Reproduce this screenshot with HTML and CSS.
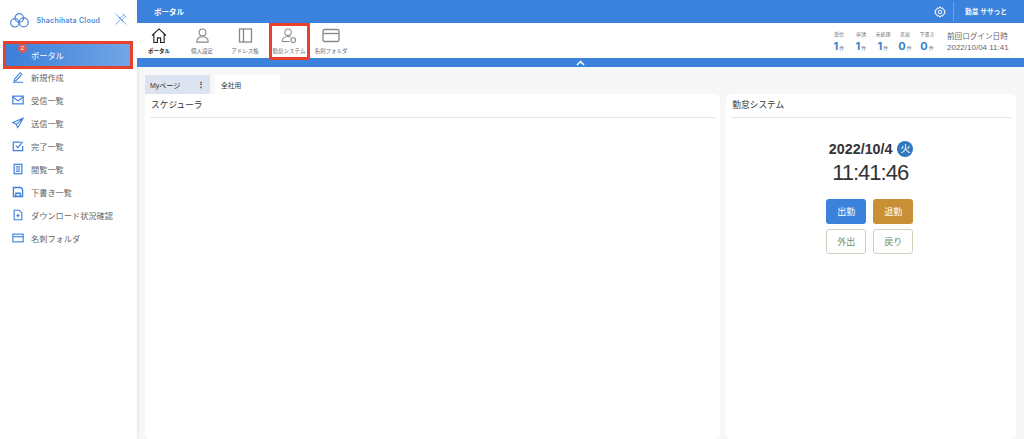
FILE: index.html
```html
<!DOCTYPE html>
<html lang="ja">
<head>
  <meta charset="UTF-8" />
  <title>ポータル</title>
  <link rel="stylesheet" href="styles.css">
</head>
<body>
  <div class="app">
    <aside class="sidebar">
      <div class="brand">
        <svg class="brand-logo" width="19" height="15" viewBox="0 0 19 15" fill="none" stroke="#4a88d8" stroke-width="1.200">
          <circle cx="4.800" cy="9.800" r="4.200"/>
          <circle cx="9.300" cy="5" r="4.300"/>
          <circle cx="13.800" cy="9.300" r="4.500"/>
        </svg>
        <span class="brand-name">Shachihata Cloud</span>
        <svg class="brand-pin" width="12" height="12" viewBox="0 0 12 12" fill="none" stroke="#7aa8e6" stroke-width="0.9">
          <path d="M.5.5l11 11M7.500.5l4 4M8.700 1.700L6 4.500 3.500 4.500 7.500 8.500 7.500 6l2.800-2.700M5 7L.5 11.500"/>
        </svg>
      </div>
      <nav class="side-nav">
        <a class="side-item active">
          <span class="badge">2</span>
          <svg class="side-icon" width="12" height="12" viewBox="0 0 14 14" fill="none" stroke="#3b7fd9" stroke-width="1">
            <circle cx="7" cy="4" r="3"/><path d="M1 13c0-3 2.500-5 6-5s6 2 6 5z"/>
          </svg>
          <span>ポータル</span>
        </a>
        <a class="side-item">
          <svg class="side-icon" width="12" height="12" viewBox="0 0 14 14" fill="none" stroke="#3b7fd9" stroke-width="1.200">
            <path d="M3 9.500L9.500 2l2 1.800L5 11l-2.500.6zM1 13h12"/>
          </svg>
          <span>新規作成</span>
        </a>
        <a class="side-item">
          <svg class="side-icon" width="12" height="12" viewBox="0 0 14 14" fill="none" stroke="#3b7fd9" stroke-width="1.400">
            <rect x="1" y="2.500" width="12" height="9"/><path d="M1 3.500l6 4.500 6-4.500"/>
          </svg>
          <span>受信一覧</span>
        </a>
        <a class="side-item">
          <svg class="side-icon" width="12" height="12" viewBox="0 0 14 14" fill="none" stroke="#3b7fd9" stroke-width="1.200">
            <path d="M13 1.500L1 6.500l4 2 1.500 4 2-2.800zM13 1.500L5 8.500"/>
          </svg>
          <span>送信一覧</span>
        </a>
        <a class="side-item">
          <svg class="side-icon" width="12" height="12" viewBox="0 0 14 14" fill="none" stroke="#3b7fd9" stroke-width="1.400">
            <path d="M12.500 7v5.500h-11v-10H10M4.500 6.500L7 9l5.500-7"/>
          </svg>
          <span>完了一覧</span>
        </a>
        <a class="side-item">
          <svg class="side-icon" width="12" height="12" viewBox="0 0 14 14" fill="none" stroke="#3b7fd9" stroke-width="1.400">
            <rect x="2.500" y="1.500" width="9" height="11"/><path d="M4.500 4.500h5M4.500 7h5M4.500 9.500h5"/>
          </svg>
          <span>閲覧一覧</span>
        </a>
        <a class="side-item">
          <svg class="side-icon" width="12" height="12" viewBox="0 0 14 14" fill="none" stroke="#3b7fd9" stroke-width="1.600">
            <path d="M1.700 1.700h8.500l2.100 2.100v8.500H1.700z"/><path d="M4.500 12V8.500h5V12"/>
          </svg>
          <span>下書き一覧</span>
        </a>
        <a class="side-item">
          <svg class="side-icon" width="12" height="12" viewBox="0 0 14 14" fill="none" stroke="#3b7fd9" stroke-width="1.300">
            <path d="M2.500 1.500h6l3 3v8h-9zM7 5.500v4M5.200 7.700h3.600"/>
          </svg>
          <span>ダウンロード状況確認</span>
        </a>
        <a class="side-item">
          <svg class="side-icon" width="12" height="12" viewBox="0 0 14 14" fill="none" stroke="#3b7fd9" stroke-width="1.300">
            <rect x="1" y="2.500" width="12" height="9"/><path d="M1 5.500h12"/>
          </svg>
          <span>名刺フォルダ</span>
        </a>
      </nav>
    </aside>

    <div class="main">
      <header class="topbar">
        <span class="topbar-title">ポータル</span>
        <svg class="gear" width="12" height="12" viewBox="0 0 24 24" fill="none" stroke="#fff" stroke-width="2">
          <circle cx="12" cy="12" r="3.500"/>
          <path d="M12 1.500l2 3.200 3.700-.8 1 3.600 3.500 1.500-1.500 3 1.500 3-3.500 1.500-1 3.600-3.700-.8-2 3.200-2-3.200-3.700.8-1-3.600L1.800 15l1.500-3-1.500-3 3.500-1.500 1-3.600 3.700.8z"/>
        </svg>
        <span class="topbar-user">勤怠 ササっと</span>
      </header>

      <div class="toolbar">
        <a class="tool current">
          <svg width="16" height="15" viewBox="0 0 17 16" fill="none" stroke="#222" stroke-width="1.200">
            <path d="M1 8L8.500 1 16 8M3 6.500v9h3.800v-5h3.400v5H14v-9"/>
          </svg>
          <span>ポータル</span>
        </a>
        <a class="tool">
          <svg width="15" height="15" viewBox="0 0 17 17" fill="none" stroke="#888" stroke-width="1.200">
            <circle cx="8.500" cy="5" r="3.800"/><path d="M2 16c0-3.500 2.500-6 6.500-6s6.500 2.500 6.500 6z"/>
          </svg>
          <span>個人設定</span>
        </a>
        <a class="tool">
          <svg width="15" height="15" viewBox="0 0 15 15" fill="none" stroke="#888" stroke-width="1.300">
            <rect x="1.500" y="1" width="12" height="13"/><path d="M5.500 1v13"/>
          </svg>
          <span>アドレス帳</span>
        </a>
        <a class="tool marked">
          <svg width="16" height="15" viewBox="0 0 17 16" fill="none" stroke="#888" stroke-width="1.100">
            <circle cx="7.500" cy="4.500" r="3.500"/><path d="M1 14.500c0-3 2.500-5.500 6.500-5.500 1 0 2 .2 2.800.5M1 14.500h8"/>
            <circle cx="13" cy="13" r="2.500"/>
          </svg>
          <span>勤怠システム</span>
        </a>
        <a class="tool">
          <svg width="18" height="15" viewBox="0 0 18 15" fill="none" stroke="#888" stroke-width="1.300">
            <rect x="1" y="1.500" width="16" height="12" rx="1.500"/><path d="M1 5.500h16"/>
          </svg>
          <span>名刺フォルダ</span>
        </a>
        <div class="stats">
          <div class="stat"><span class="stat-label">受信</span><span class="stat-value"><b>1</b>件</span></div>
          <div class="stat"><span class="stat-label">申請</span><span class="stat-value"><b>1</b>件</span></div>
          <div class="stat"><span class="stat-label">未処理</span><span class="stat-value"><b>1</b>件</span></div>
          <div class="stat"><span class="stat-label">差戻</span><span class="stat-value"><b>0</b>件</span></div>
          <div class="stat"><span class="stat-label">下書き</span><span class="stat-value"><b>0</b>件</span></div>
        </div>
        <div class="last-login">
          <div class="login-label">前回ログイン日時</div>
          <div>2022/10/04 11:41</div>
        </div>
      </div>

      <div class="collapse-bar">
        <svg width="9" height="6" viewBox="0 0 9 6" fill="none" stroke="#fff" stroke-width="1.500"><path d="M1 5l3.500-3.500L8 5"/></svg>
      </div>

      <div class="content">
        <div class="tabs">
          <div class="tab mypage"><span>Myページ</span><span class="tab-dots">⋮</span></div>
          <div class="tab company">全社用</div>
        </div>
        <div class="panels">
          <section class="card schedule">
            <h2 class="card-title">スケジューラ</h2>
          </section>
          <section class="card attendance">
            <h2 class="card-title">勤怠システム</h2>
            <div class="clock">
              <div class="clock-date">2022/10/4 <span class="weekday">火</span></div>
              <div class="clock-time">11:41:46</div>
              <div class="buttons">
                <button class="btn btn-in">出勤</button>
                <button class="btn btn-out">退勤</button>
                <button class="btn btn-line">外出</button>
                <button class="btn btn-line">戻り</button>
              </div>
            </div>
          </section>
        </div>
      </div>
    </div>
  </div>
</body>
</html>
```

FILE: styles.css
```css
* {
  box-sizing: border-box;
}

html, body {
  height: 100%;
}

body {
  margin: 0;
  overflow: hidden;
  background: #f7f7f7;
  color: #333;
  font-family: "Liberation Sans", "Noto Sans CJK JP", sans-serif;
}

.app {
  display: flex;
  height: 439px;
}

/* sidebar */
.sidebar {
  width: 137px;
  flex-shrink: 0;
  background: #fff;
  box-shadow: 1px 0 3px rgba(0,0,0,0.08);
}

.brand {
  display: flex;
  align-items: center;
  height: 41px;
  padding: 0 10px 0 10px;
}

.brand-name {
  margin-left: 7.5px;
  flex-grow: 1;
  font-family: "Inter", sans-serif;
  font-size: 7px;
  font-weight: 600;
  letter-spacing: 0.25px;
  color: #4a88d8;
  white-space: nowrap;
}

.brand-pin {
  margin-top: -3px;
}

.side-item {
  display: flex;
  align-items: center;
  height: 23px;
  padding-left: 12px;
  gap: 7px;
  font-size: 8.2px;
  color: #666;
}

.side-item.active {
  position: relative;
  height: 28px;
  margin: 0 4px 0 3px;
  padding-left: 6px;
  border: 3px solid #e8402a;
  background: linear-gradient(90deg, #3b7fd9, #72a6e6);
  color: #fff;
}

.side-item.active + .side-item {
  margin-top: -3.5px;
}

.badge {
  position: absolute;
  left: 12px;
  top: 0;
  width: 9px;
  height: 9px;
  border-radius: 50%;
  background: #dc5a5a;
  color: #fff;
  font-size: 6px;
  line-height: 9px;
  text-align: center;
}

/* top */
.main {
  flex-grow: 1;
  display: flex;
  flex-direction: column;
  min-width: 0;
}

.topbar {
  display: flex;
  align-items: center;
  height: 23px;
  padding: 0 17px;
  background: #3b82dc;
  color: #fff;
  font-size: 7.5px;
  font-weight: bold;
}

.topbar-title {
  flex-grow: 1;
}

.gear {
  margin-right: 7px;
}

.topbar-user {
  padding-left: 11px;
  line-height: 19px;
  border-left: 1px solid #6fa3e6;
  font-size: 6.7px;
}

.toolbar {
  display: flex;
  height: 35px;
  padding-left: 0.5px;
  background: #fff;
}

.tool {
  display: flex;
  flex-direction: column;
  align-items: center;
  width: 43px;
  padding-top: 5px;
  gap: 4px;
  font-size: 5.5px;
  color: #666;
  white-space: nowrap;
}

.tool.current {
  color: #222;
  font-weight: bold;
}

/* red marker, hangs over the blue bar below */
.tool.marked {
  position: relative;
  z-index: 1;
  width: 41px;
  height: 37px;
  margin-left: 2px;
  padding-top: 2px;
  border: 3px solid #e8402a;
  background: #fff;
}

.stats {
  display: flex;
  margin-left: auto;
  padding-top: 7px;
}

.stat {
  display: flex;
  flex-direction: column;
  align-items: center;
  width: 22px;
  font-size: 5px;
  color: #777;
  gap: 3px;
}

.stat-value {
  color: #777;
  font-size: 5px;
  white-space: nowrap;
}

.stat-value b {
  margin-right: 1px;
  color: #3b82c8;
  font-family: "Inter", sans-serif;
  font-size: 11px;
  line-height: 12px;
}

.last-login {
  width: 86px;
  padding: 8px 0 0 9px;
  font-size: 8px;
  line-height: 11px;
  color: #666;
  white-space: nowrap;
}

.login-label {
  font-size: 7.6px;
}

.collapse-bar {
  display: flex;
  align-items: center;
  justify-content: center;
  height: 9px;
  background: #3b82dc;
}

/* content */
.content {
  flex-grow: 1;
  display: flex;
  flex-direction: column;
  min-height: 0;
  padding: 8px 8px 0 8px;
}

.tabs {
  display: flex;
  gap: 5px;
  height: 19px;
}

.tab {
  display: flex;
  align-items: center;
  width: 65px;
  padding: 0 5px;
  font-size: 7px;
}

.tab.mypage {
  justify-content: space-between;
  background: #dde4f1;
}

.tab-dots {
  font-size: 8px;
  font-weight: bold;
}

.tab.company {
  padding-left: 6px;
  background: #fff;
  font-size: 6.8px;
}

.panels {
  flex-grow: 1;
  display: flex;
  gap: 6px;
  min-height: 0;
}

.card {
  background: #fff;
  border-radius: 5px;
  padding: 0 5px;
}

.schedule {
  width: 576px;
}

.attendance {
  width: 290px;
}

.card-title {
  margin: 0;
  padding: 4px 1px 0;
  height: 24px;
  border-bottom: 1px solid #e6e6e6;
  font-size: 8.7px;
  font-weight: normal;
  color: #333;
}

.clock {
  display: flex;
  flex-direction: column;
  align-items: center;
  padding-top: 22px;
}

.clock-date {
  display: flex;
  align-items: center;
  gap: 5px;
  height: 17px;
  font-size: 14.3px;
  font-weight: bold;
  color: #333;
}

.weekday {
  width: 16px;
  height: 16px;
  border-radius: 50%;
  background: #2f78bd;
  color: #fff;
  font-size: 10px;
  font-weight: normal;
  line-height: 16px;
  text-align: center;
}

.clock-time {
  margin: 2px 2px 0 0;
  font-size: 22px;
  letter-spacing: -1px;
  line-height: 27px;
  color: #333;
}

.buttons {
  display: grid;
  grid-template-columns: 40px 40px;
  gap: 5px 7px;
  margin: 13px 3px 0 0;
}

.btn {
  height: 25px;
  padding: 0;
  border: 1px solid transparent;
  border-radius: 3px;
  font-family: inherit;
  font-size: 9px;
  color: #fff;
}

.btn-in {
  background: #3b82dc;
}

.btn-out {
  background: #c98f35;
}

.btn-line {
  background: #fff;
  border-color: #c5d6bd;
  color: #6f8f5f;
}
```
